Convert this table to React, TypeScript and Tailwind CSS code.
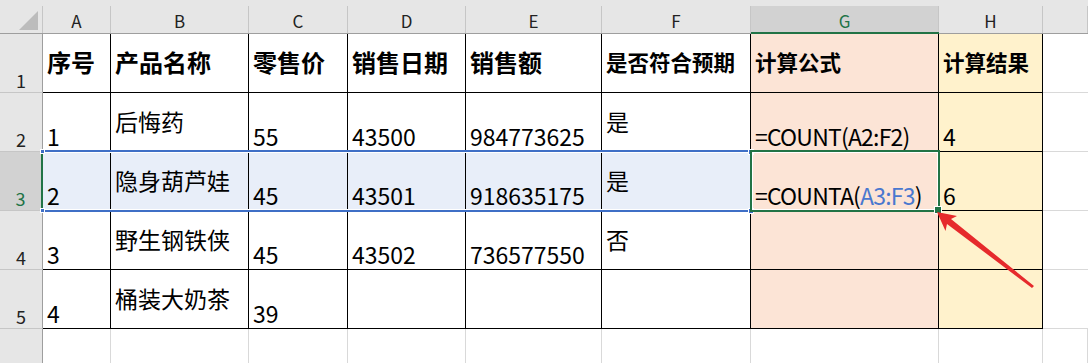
import type { ReactNode } from 'react'

const letters = ['A', 'B', 'C', 'D', 'E', 'F', 'G', 'H', '']

const heads = ['序号', '产品名称', '零售价', '销售日期', '销售额', '是否符合预期', '计算公式', '计算结果']

const rows: ReactNode[][] = [
  ['1', '后悔药', '55', '43500', '984773625', '是', '=COUNT(A2:F2)', '4'],
  [
    '2', '隐身葫芦娃', '45', '43501', '918635175', '是',
    <>=COUNTA(<span className="text-[#4a78cf]">A3:F3</span>)</>,
    '6',
  ],
  ['3', '野生钢铁侠', '45', '43502', '736577550', '否', '', ''],
  ['4', '桶装大奶茶', '39', '', '', '', '', ''],
]

const isCjk = (v: ReactNode) => typeof v === 'string' && /[\u4e00-\u9fff]/.test(v)

function ColHead({ label, active }: { label: string; active?: boolean }) {
  return (
    <div className={active
      ? 'flex flex-col bg-[#d2d2d2] border-b-2 border-[#217346]'
      : 'flex flex-col bg-[#e6e6e6] border-b border-[#9e9e9e]'}>
      <div className="h-[6px] bg-[#e6e6e6]" />
      <div className={active
        ? 'flex flex-1 items-end justify-center border-r border-[#c6c6c6] pb-[3px] text-[17px] leading-none text-[#217346]'
        : 'flex flex-1 items-end justify-center border-r border-[#c6c6c6] pb-[4px] text-[17px] leading-none text-[#222]'}>
        {label}
      </div>
    </div>
  )
}

function RowHead({ n, active, last }: { n: string; active?: boolean; last?: boolean }) {
  const base = 'flex items-end justify-center pb-[3px] text-[18px] leading-none '
  if (active) return <div className={base + 'bg-[#d2d2d2] border-r-2 border-r-[#217346] border-b border-b-[#c6c6c6] text-[#217346]'}>{n}</div>
  return (
    <div className={base + (last
      ? 'bg-[#e6e6e6] border-r border-r-[#9e9e9e] text-[#222]'
      : 'bg-[#e6e6e6] border-r border-r-[#9e9e9e] border-b border-b-[#c6c6c6] text-[#222]')}>
      {n}
    </div>
  )
}

function DataCell({ v, col, row }: { v: ReactNode; col: number; row: number }) {
  let bg = 'bg-white'
  if (col === 6) bg = 'bg-[#fce4d6]'
  else if (col === 7) bg = 'bg-[#fff2cc]'
  else if (row === 1) bg = 'bg-[#e8eef9]'
  const align = isCjk(v) ? 'items-center pb-[2px]' : 'items-end pb-[3px]'
  // formulas are drawn a bit tighter, like the sheet's font
  const track = col === 6 ? 'tracking-[-0.8px]' : ''
  return (
    <div className={`flex ${align} ${bg} ${track} border-r border-b border-black pl-[4px] text-[23px] leading-none whitespace-nowrap`}>
      {v}
    </div>
  )
}

export default function App() {
  return (
    <div className="relative h-[363px] w-[1088px] overflow-hidden bg-white font-['Noto_Sans_CJK_SC',sans-serif] text-black">
      <div className="grid grid-cols-[43px_68px_138px_99px_118px_136px_149px_188px_104px_45px] grid-rows-[34px_59px_59px_59px_59px_59px_35px]">
        {/* corner */}
        <div className="flex flex-col bg-[#e6e6e6] border-b border-[#9e9e9e]">
          <div className="h-[6px]" />
          <div className="flex flex-1 items-end justify-end border-r border-[#c6c6c6] pr-[4px] pb-[3px]">
            <svg width="19" height="19" viewBox="0 0 19 19">
              <polygon points="0,19 19,19 19,0" fill="#bcbcbc" />
            </svg>
          </div>
        </div>
        {letters.map((l, i) => <ColHead key={i} label={l} active={l === 'G'} />)}

        {/* row 1 */}
        <RowHead n="1" />
        {heads.map((h, i) => (
          <div key={h}
            className={`flex items-center pb-[3px] pl-[4px] border-r border-b border-black font-bold leading-none whitespace-nowrap
              ${i === 6 ? 'bg-[#fce4d6]' : i === 7 ? 'bg-[#fff2cc]' : 'bg-white'}
              ${i >= 5 ? 'text-[21.5px]' : 'text-[24px]'}`}>
            {h}
          </div>
        ))}
        <div className="border-b border-[#d9d9d9]" />

        {rows.map((r, ri) => (
          <div key={ri} className="contents">
            <RowHead n={String(ri + 2)} active={ri === 1} />
            {r.map((v, ci) => <DataCell key={ci} v={v} col={ci} row={ri} />)}
            <div className="border-b border-[#d9d9d9]" />
          </div>
        ))}

        {/* row 6, its number is below the visible edge */}
        <RowHead n="" last />
        {letters.map((_, i) => <div key={i} className="border-r border-[#d9d9d9]" />)}
      </div>

      {/* selection A3:F3 */}
      <div className="absolute left-[42px] top-[150px] h-[62px] w-[709px] border-y-2 border-[#3f6fc6] shadow-[inset_0_1px_0_#fff,inset_0_-1px_0_#fff] pointer-events-none" />
      <div className="absolute left-[40px] top-[149px] h-[5px] w-[5px] bg-[#3f6fc6] border border-white" />
      <div className="absolute left-[40px] top-[208px] h-[5px] w-[5px] bg-[#3f6fc6] border border-white" />
      <div className="absolute left-[748px] top-[149px] h-[6px] w-[6px] bg-[#3f6fc6] border border-white" />
      <div className="absolute left-[748px] top-[208px] h-[6px] w-[6px] bg-[#3f6fc6] border border-white" />

      {/* active cell G3 */}
      <div className="absolute left-[750px] top-[150px] h-[62px] w-[190px] border-2 border-[#217346] shadow-[inset_0_0_0_1px_#fff] pointer-events-none" />
      <div className="absolute left-[934px] top-[206px] h-[8px] w-[8px] bg-[#217346] border border-white" />

      {/* red arrow */}
      <svg className="absolute left-0 top-0 pointer-events-none" width="1088" height="363">
        <polygon
          points="937,212 957,216 951,219 1034,286 1032,288 947,224 945.5,231"
          fill="#e62a2c"
        />
      </svg>
    </div>
  )
}
